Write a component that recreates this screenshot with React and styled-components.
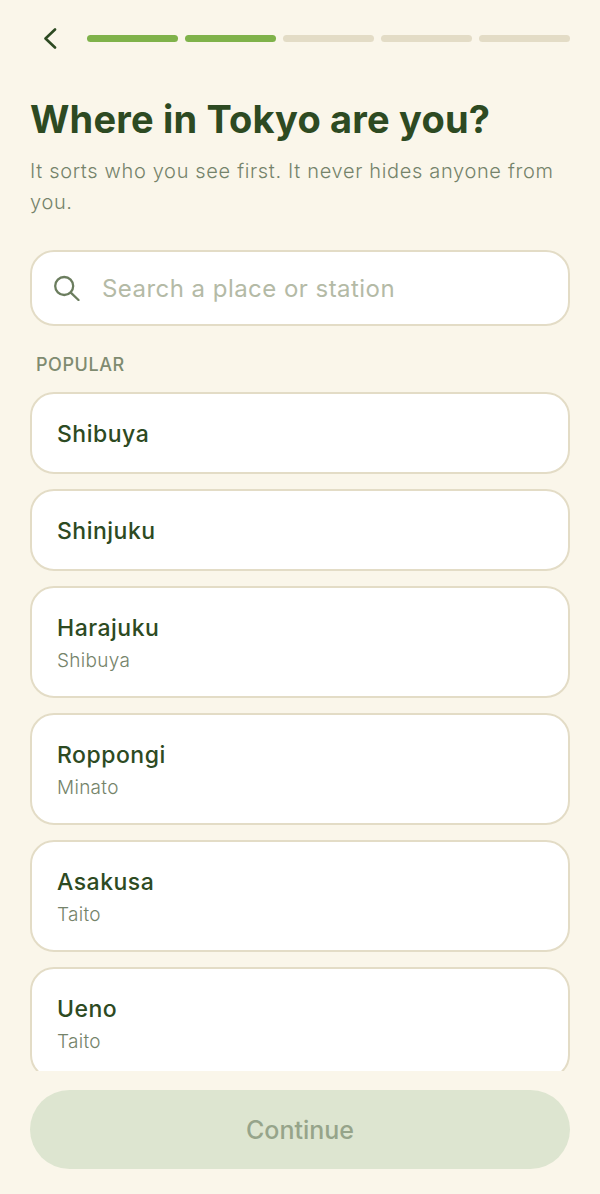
import React from "react";
import styled, { createGlobalStyle } from "styled-components";

const Global = createGlobalStyle`
  html, body { margin: 0; padding: 0; background: #faf6ea; }
  * { box-sizing: border-box; }
`;

const Page = styled.div`
  width: 600px;
  height: 1194px;
  background: #faf6ea;
  font-family: Inter, "Liberation Sans", sans-serif;
  display: flex;
  flex-direction: column;
  overflow: hidden;
`;
const Header = styled.div`
  display: flex;
  align-items: center;
  height: 21px;
  margin-top: 28px;
  padding: 0 30px 0 42px;
`;
const Back = styled.div`
  width: 45px;
  height: 21px;
  display: flex;
  color: #2d4a22;
`;
const Progress = styled.div`
  flex: 1;
  display: flex;
  gap: 7px;
`;
const Segment = styled.div`
  flex: 1;
  height: 7px;
  border-radius: 4px;
  background: ${(p) => (p.$on ? "#7fb24a" : "#e3dcc6")};
`;
const Body = styled.div`
  padding: 0 30px;
  flex: 1;
  min-height: 0;
  display: flex;
  flex-direction: column;
`;
const Title = styled.h1`
  margin: 47px 0 0;
  font-size: 38px;
  line-height: 46px;
  font-weight: 700;
  letter-spacing: 0.18px;
  color: #2d4a22;
`;
const Subtitle = styled.p`
  margin: 14px 0 0;
  font-size: 20px;
  line-height: 31px;
  letter-spacing: 0.66px;
  font-weight: 300;
  color: #75836a;
`;
const Search = styled.div`
  margin-top: 32px;
  height: 76px;
  flex: none;
  border: 2px solid #e3dcc6;
  border-radius: 24px;
  background: #fff;
  display: flex;
  align-items: center;
  padding-left: 22px;
  gap: 22px;
  color: #6b7d5e;
`;
const Placeholder = styled.span`
  font-size: 24px;
  letter-spacing: 0.46px;
  color: #b4baa6;
`;
const Section = styled.div`
  margin: 28px 0 0 6px;
  font-size: 18px;
  line-height: 22px;
  font-weight: 500;
  letter-spacing: 0.57px;
  color: #7f8b70;
`;
const List = styled.div`
  margin-top: 16px;
  height: 679px;
  flex: none;
  overflow: hidden;
  display: flex;
  flex-direction: column;
  gap: 15px;
`;
const Card = styled.div`
  flex: none;
  height: ${(p) => (p.$sub ? "112px" : "82px")};
  border: 2px solid #e3dcc6;
  border-radius: 24px;
  background: #fff;
  padding: 2px 25px 0;
  display: flex;
  flex-direction: column;
  justify-content: center;
`;
const Name = styled.div`
  font-size: 23px;
  line-height: 30px;
  font-weight: 450;
  letter-spacing: 0.5px;
  color: #2d4a22;
`;
const Sub = styled.div`
  margin-top: 6px;
  font-size: 19px;
  line-height: 24px;
  letter-spacing: 0.3px;
  font-weight: 300;
  color: #75836a;
`;
const Footer = styled.div`
  padding: 19px 30px 25px;
  flex: none;
`;
const Button = styled.div`
  height: 79px;
  border-radius: 40px;
  background: #dde5d0;
  color: #96a48a;
  font-size: 25px;
  font-weight: 500;
  display: flex;
  align-items: center;
  justify-content: center;
`;

const places = [
  ["Shibuya"],
  ["Shinjuku"],
  ["Harajuku", "Shibuya"],
  ["Roppongi", "Minato"],
  ["Asakusa", "Taito"],
  ["Ueno", "Taito"],
];

export default function App() {
  return (
    <Page>
      <Global />
      <Header>
        <Back>
          <svg width="16" height="21" viewBox="0 0 16 21" fill="none" stroke="currentColor" strokeWidth="2.6" strokeLinecap="round" strokeLinejoin="round">
            <path d="M13 1.5 L3.5 10.5 L13 19.5" />
          </svg>
        </Back>
        <Progress>
          {[1, 1, 0, 0, 0].map((on, i) => (
            <Segment key={i} $on={!!on} />
          ))}
        </Progress>
      </Header>
      <Body>
        <Title>Where in Tokyo are you?</Title>
        <Subtitle>It sorts who you see first. It never hides anyone from you.</Subtitle>
        <Search>
          <svg width="26" height="26" viewBox="0 0 26 26" fill="none" stroke="currentColor" strokeWidth="2.3" strokeLinecap="round">
            <circle cx="10.2" cy="11" r="9" />
            <path d="M16.8 17.6 L24.5 25" />
          </svg>
          <Placeholder>Search a place or station</Placeholder>
        </Search>
        <Section>POPULAR</Section>
        <List>
          {places.map(([n, s]) => (
            <Card key={n} $sub={!!s}>
              <Name>{n}</Name>
              {s && <Sub>{s}</Sub>}
            </Card>
          ))}
        </List>
      </Body>
      <Footer>
        <Button>Continue</Button>
      </Footer>
    </Page>
  );
}
